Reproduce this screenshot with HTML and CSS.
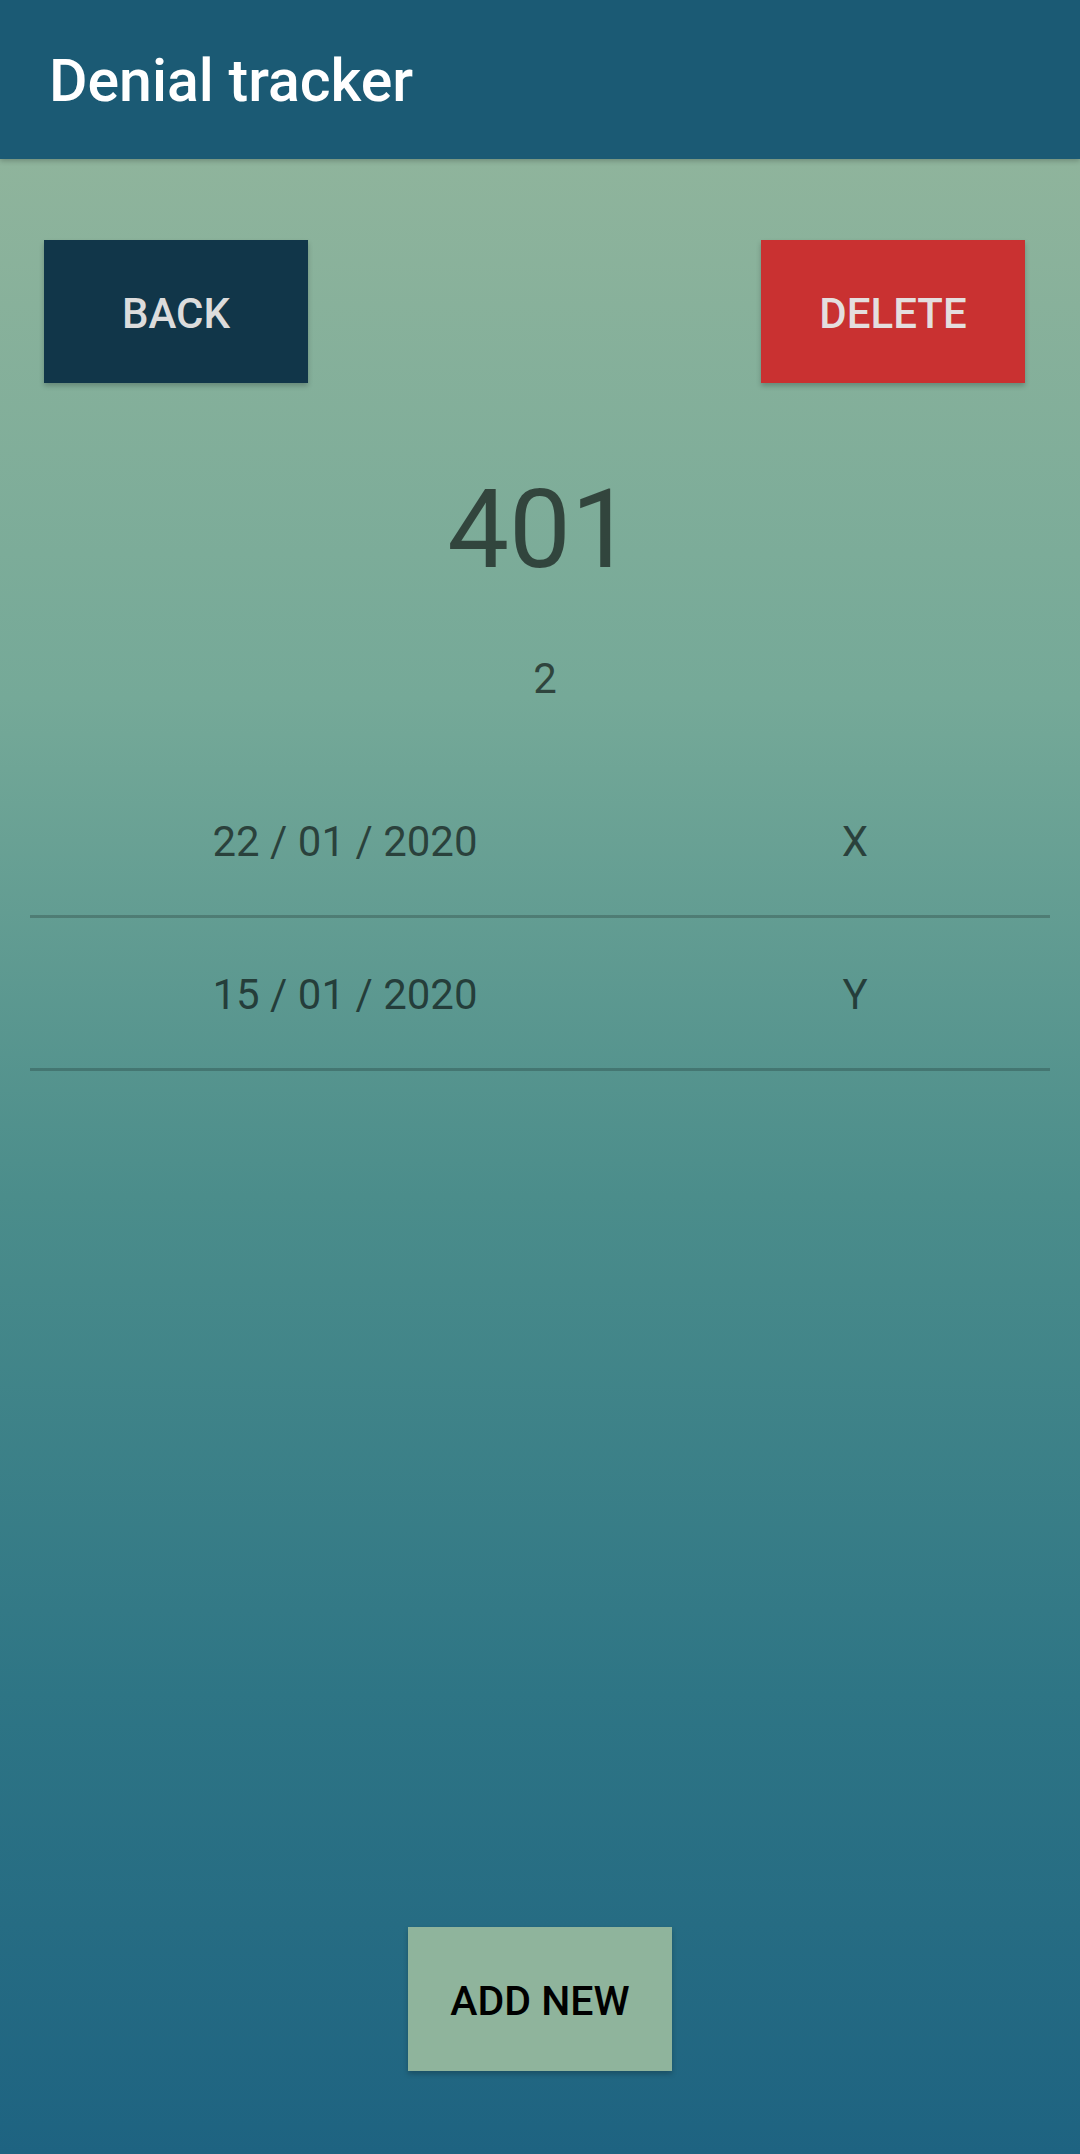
FILE: index.html
```html
<!DOCTYPE html>
<html lang="en">
<head>
<meta charset="utf-8">
<title>Denial tracker</title>
<link rel="stylesheet" href="styles.css">
</head>
<body>
<header class="appbar">
  <h1 class="title">Denial tracker</h1>
</header>
<main class="screen">
  <div class="actions">
    <button class="btn btn-back">BACK</button>
    <button class="btn btn-delete">DELETE</button>
  </div>
  <div class="code">401</div>
  <div class="count">2</div>
  <div class="list">
    <div class="row">
      <span class="cell date">22 / 01 / 2020</span>
      <span class="cell tag">X</span>
    </div>
    <div class="row">
      <span class="cell date">15 / 01 / 2020</span>
      <span class="cell tag">Y</span>
    </div>
  </div>
  <button class="btn btn-add">ADD NEW</button>
</main>
</body>
</html>
```

FILE: styles.css
```css
html, body {
  margin: 0;
  padding: 0;
}
body {
  width: 1080px;
  height: 2154px;
  font-family: Roboto, "Noto Sans", "Liberation Sans", sans-serif;
  overflow: hidden;
}
.appbar {
  position: relative;
  z-index: 2;
  height: 159px;
  background: #1b5a74;
  display: flex;
  align-items: center;
  padding-left: 49px;
  box-shadow: 0 2px 5px rgba(0, 0, 0, 0.22);
}
.title {
  margin: 0;
  color: #ffffff;
  font-size: 59px;
  font-weight: 500;
  line-height: 1;
  padding-top: 1px;
}
.screen {
  height: 1995px;
  display: flex;
  flex-direction: column;
  background: linear-gradient(to bottom,
    #8fb49c 0%,
    #75a998 27%,
    #4b8d8b 52%,
    #2e7585 77%,
    #1e6381 100%);
}
.actions {
  display: flex;
  justify-content: space-between;
  padding: 81px 55px 0 44px;
}
.btn {
  width: 264px;
  height: 143px;
  border: none;
  border-radius: 0;
  font-family: Roboto, "Noto Sans", "Liberation Sans", sans-serif;
  font-size: 42px;
  font-weight: 500;
  padding: 4px 0 0;
  box-shadow: 0 3px 5px rgba(0, 0, 0, 0.22);
}
.btn-back {
  background: #113649;
  color: #dcdcdc;
}
.btn-delete {
  background: #c93131;
  color: #e4dede;
}
.code {
  margin-top: 92px;
  text-align: center;
  font-size: 110px;
  line-height: 1;
  color: rgba(0, 0, 0, 0.6);
}
.count {
  margin-top: 73px;
  text-align: center;
  font-size: 42px;
  line-height: 1;
  color: rgba(0, 0, 0, 0.6);
  padding-left: 10px;
}
.list {
  margin: 65px 30px 0;
}
.row {
  display: grid;
  grid-template-columns: 630px 390px;
  height: 150px;
  border-bottom: 3px solid rgba(0, 0, 0, 0.2);
}
.cell {
  text-align: center;
  font-size: 42px;
  line-height: 42px;
  padding-top: 56px;
  color: rgba(0, 0, 0, 0.6);
}
.btn-add {
  margin: auto auto 83px;
  height: 144px;
  background: #8fb49c;
  color: #000000;
  font-size: 41px;
}
```
